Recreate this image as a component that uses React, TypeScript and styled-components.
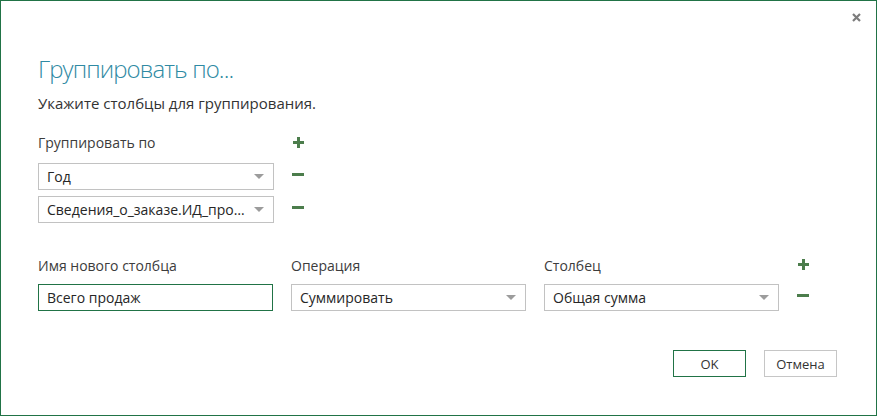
import React from 'react'
import styled, { createGlobalStyle } from 'styled-components'

const GlobalStyle = createGlobalStyle`
  html, body {
    margin: 0;
    padding: 0;
    background: #ffffff;
  }
  body {
    font-family: 'Segoe UI', 'Open Sans', 'Noto Sans', sans-serif;
    color: #333333;
  }
`

const Dialog = styled.div`
  width: 877px;
  height: 416px;
  box-sizing: border-box;
  border: 1px solid #217346;
  background: #ffffff;
  display: flex;
  flex-direction: column;
`

const TopBar = styled.div`
  height: 33px;
  display: flex;
  align-items: center;
  justify-content: flex-end;
  padding-right: 14px;
`

const CloseButton = styled.button`
  width: 12px;
  height: 12px;
  padding: 0;
  border: none;
  background: transparent;
  display: flex;
  align-items: center;
  justify-content: center;
  cursor: pointer;
`

const Body = styled.div`
  padding: 0 39px 0 37px;
  display: flex;
  flex-direction: column;
`

const Title = styled.h1`
  margin: 19px 0 0;
  font-size: 24px;
  line-height: 32px;
  font-weight: 300;
  letter-spacing: -0.9px;
  color: #2f8aa3;
`

const Subtitle = styled.p`
  margin: 8px 0 0;
  font-size: 15px;
  line-height: 20px;
  color: #333333;
`

const GroupGrid = styled.div`
  margin-top: 20px;
  display: grid;
  grid-template-columns: 236px 12px;
  column-gap: 18px;
  row-gap: 6px;
  align-items: center;
`

const Label = styled.div`
  font-size: 14px;
  line-height: 20px;
  color: #3c3c3c;
  white-space: nowrap;
`

const LabelCell = styled(Label)`
  margin-bottom: 4px;
`

const Select = styled.div`
  height: 27px;
  box-sizing: border-box;
  border: 1px solid #c2c2c2;
  background: #ffffff;
  display: flex;
  align-items: center;
  padding: 0 9px 0 8px;
  font-size: 14px;
  color: #262626;
`

const SelectText = styled.span`
  flex: 1;
  white-space: nowrap;
  overflow: hidden;
  text-overflow: ellipsis;
`

const Arrow = styled.span`
  width: 0;
  height: 0;
  margin-left: 6px;
  border-left: 5px solid transparent;
  border-right: 5px solid transparent;
  border-top: 5px solid #9c9c9c;
`

const TextInput = styled.div`
  height: 27px;
  box-sizing: border-box;
  border: 1px solid #217346;
  display: flex;
  align-items: center;
  padding: 0 8px;
  font-size: 14px;
  color: #262626;
`

const IconButton = styled.button<{ $shift?: number }>`
  width: 12px;
  height: 12px;
  padding: 0;
  border: none;
  background: transparent;
  display: flex;
  align-items: center;
  justify-content: center;
  transform: translateY(${({ $shift }) => $shift ?? 0}px);
  cursor: pointer;
`

const AggGrid = styled.div`
  margin-top: 33px;
  display: grid;
  grid-template-columns: 235px 235px 235px 12px;
  column-gap: 18px;
  row-gap: 8px;
  align-items: center;
`

const Footer = styled.div`
  margin-top: 39px;
  display: flex;
  justify-content: flex-end;
  gap: 18px;
`

const Button = styled.button<{ $primary?: boolean }>`
  width: 73px;
  height: 27px;
  box-sizing: border-box;
  background: #ffffff;
  border: 1px solid ${({ $primary }) => ($primary ? '#217346' : '#c6c6c6')};
  font-family: inherit;
  font-size: 13px;
  color: #333333;
  padding: 0;
  cursor: pointer;
`

const PlusIcon = () => (
  <svg width="11" height="11" viewBox="0 0 11 11">
    <rect x="0" y="4" width="11" height="3" fill="#4c7d4c" />
    <rect x="4" y="0" width="3" height="11" fill="#4c7d4c" />
  </svg>
)

const MinusIcon = () => (
  <svg width="12" height="3" viewBox="0 0 12 3">
    <rect x="0" y="0" width="12" height="3" fill="#4c7d4c" />
  </svg>
)

const CloseIcon = () => (
  <svg width="9" height="9" viewBox="0 0 9 9">
    <path d="M1 1 L8 8 M8 1 L1 8" stroke="#7d7d7d" strokeWidth="2.2" />
  </svg>
)

const DropDown = ({ value }: { value: string }) => (
  <Select>
    <SelectText>{value}</SelectText>
    <Arrow />
  </Select>
)

export default function App() {
  return (
    <>
      <GlobalStyle />
      <Dialog>
        <TopBar>
          <CloseButton>
            <CloseIcon />
          </CloseButton>
        </TopBar>
        <Body>
          <Title>Группировать по...</Title>
          <Subtitle>Укажите столбцы для группирования.</Subtitle>

          <GroupGrid>
            <LabelCell>Группировать по</LabelCell>
            <IconButton $shift={-3}>
              <PlusIcon />
            </IconButton>
            <DropDown value="Год" />
            <IconButton $shift={-2}>
              <MinusIcon />
            </IconButton>
            <DropDown value="Сведения_о_заказе.ИД_продукта" />
            <IconButton $shift={-2}>
              <MinusIcon />
            </IconButton>
          </GroupGrid>

          <AggGrid>
            <Label>Имя нового столбца</Label>
            <Label>Операция</Label>
            <Label>Столбец</Label>
            <IconButton $shift={-2}>
              <PlusIcon />
            </IconButton>
            <TextInput>Всего продаж</TextInput>
            <DropDown value="Суммировать" />
            <DropDown value="Общая сумма" />
            <IconButton $shift={-2}>
              <MinusIcon />
            </IconButton>
          </AggGrid>

          <Footer>
            <Button $primary>OK</Button>
            <Button>Отмена</Button>
          </Footer>
        </Body>
      </Dialog>
    </>
  )
}
